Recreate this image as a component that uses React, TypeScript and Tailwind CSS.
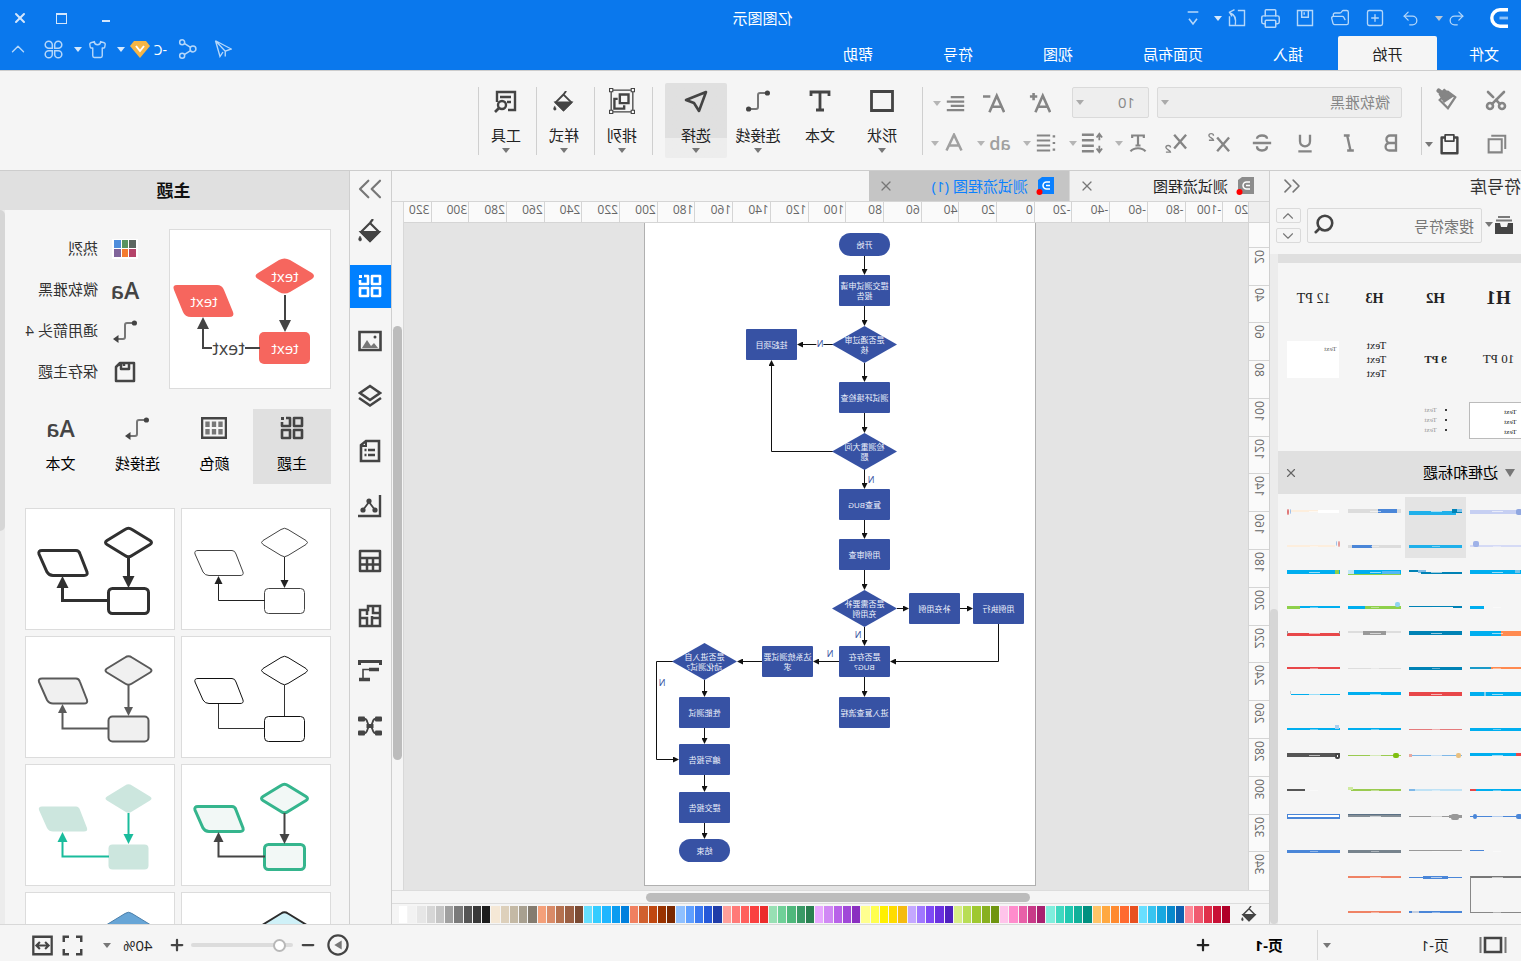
import React from "react";
import {
  Undo2, Redo2, SquarePlus, FolderOpen, Printer, ChevronUp, ChevronDown, ChevronsLeft, ChevronsRight,
  Scissors, Search, X, Shirt, Plus, Minus,
} from "lucide-react";

type Kids = { children?: React.ReactNode; className?: string };

const Caret = ({ className = "text-[#777]" }: { className?: string }) => (
  <svg viewBox="0 0 8 5" className={`h-[5px] w-2 shrink-0 ${className}`} fill="currentColor" aria-hidden="true"><path d="M0 0h8L4 5z" /></svg>
);

const Ico = ({ children, className = "size-6" }: Kids) => (
  <svg viewBox="0 0 24 24" className={`shrink-0 ${className}`} fill="none" stroke="currentColor" strokeWidth="2" aria-hidden="true">{children}</svg>
);

const Bucket = ({ className }: { className?: string }) => (
  <Ico className={className}>
    <path d="M9 0l3 4M12 4l9 9-9 9-9-9z" strokeWidth="2.200" />
    <path d="M3 13h18l-9 9z" fill="currentColor" />
    <path d="M22 17c1 2 2 3 1 4.500a1.500 1.500 0 0 1-2.500-.5c-.3-1.500.8-2.500 1.500-4z" fill="currentColor" strokeWidth="0.500" />
  </Ico>
);

const Tiles = ({ className }: { className?: string }) => (
  <Ico className={className}>
    <path d="M2 2h8v8H2zM2 14h8v8H2zM14 14h8v8h-8zM18 2h-4v8h8V6" strokeWidth="2.600" strokeLinejoin="round" />
    <path d="M20 1h3v3h-3z" fill="currentColor" stroke="none" />
  </Ico>
);

const Connector = ({ arrow = false, className }: { arrow?: boolean; className?: string }) => (
  <Ico className={className}>
    <path d="M4 4h6q2 0 2 2v12q0 2 2 2h5" stroke="#777" strokeWidth="2" />
    <circle cx="2.600" cy="4" r="2.600" fill="currentColor" stroke="none" />
    {arrow ? <path d="M18.500 16l5.500 4-5.500 4z" fill="currentColor" stroke="none" /> : <circle cx="21.400" cy="20" r="2.600" fill="currentColor" stroke="none" />}
  </Ico>
);

const quick = "flex w-[35px] justify-center";

function TitleBar() {
  return (
    <div className="flex h-9 items-center text-[#b5d7fa]">
      <svg viewBox="0 0 18 20" className="ml-[13px] mr-[23px] h-5 w-[18px]" fill="none" stroke="#fff" strokeWidth="3.400" aria-hidden="true">
        <path d="M0 1.800h8a8.200 8.200 0 0 1 0 16.400H0" /><path d="M0 10h8.500" stroke="#8cc1f8" strokeWidth="2.800" />
      </svg>
      <button aria-label="撤销" className="flex w-5 justify-center"><Undo2 className="size-[19px]" strokeWidth={1.6} /></button>
      <button aria-label="撤销历史" className="flex w-4 justify-center"><Caret className="text-[#b9c6d4]" /></button>
      <button aria-label="重做" className="ml-[3px] flex w-[35px] justify-center"><Redo2 className="size-[19px]" strokeWidth={1.6} /></button>
      <button aria-label="新建" className={quick}><SquarePlus className="size-5" strokeWidth={1.6} /></button>
      <button aria-label="打开" className={quick}><FolderOpen className="size-5" strokeWidth={1.6} /></button>
      <button aria-label="保存" className={quick}>
        <Ico className="size-5"><path d="M3 3h18v18H3zM8 3v8h8V3M13 5v3" strokeWidth="1.700" /></Ico>
      </button>
      <button aria-label="打印" className={quick}><Printer className="size-[21px]" strokeWidth={1.7} /></button>
      <button aria-label="导出" className="flex w-[31px] justify-center">
        <Ico className="size-5"><path d="M11 3H3v18h18V10M14 20c-1-7 0-12 6-14M15 2l6 3-3 5" strokeWidth="1.700" /></Ico>
      </button>
      <Caret className="text-[#d5e8fc]" />
      <button aria-label="自定义工具栏" className="ml-[11px] flex w-5 justify-center">
        <Ico className="size-4"><path d="M4 3h16M6 13l6 8 6-8" strokeWidth="2.400" /></Ico>
      </button>
      <h1 className="flex-1 text-center text-[15px] text-white">亿图图示</h1>
      <div className="flex w-[342px] justify-end text-[#d3e6fc]">
        <button aria-label="最小化" className="flex w-11 items-end justify-center"><span className="mb-1 h-[2px] w-2 bg-current" /></button>
        <button aria-label="最大化" className="flex w-11 items-center justify-center"><span className="h-[11px] w-[11px] border border-t-2 border-current" /></button>
        <button aria-label="关闭" className="flex w-10 items-center justify-center"><X className="size-4" strokeWidth={3} /></button>
      </div>
    </div>
  );
}

function MenuBar() {
  const rest = ["插入", "页面布局", "视图", "符号", "帮助"];
  return (
    <div className="flex h-[34px] items-stretch text-[15px] text-white">
      <button className="mr-[10px] w-[74px] pt-[2px]">文件</button>
      <button className="w-[99px] rounded-t-xs bg-[#f5f5f5] pt-[2px] text-[#222]">开始</button>
      {rest.map((t) => <button key={t} className="px-[35px] pt-[2px]">{t}</button>)}
      <div className="ml-auto flex items-center pb-2 text-[#b5d7fa]">
        <button aria-label="发送" className="flex w-[35px] justify-center">
          <Ico className="size-[18px]"><path d="M22 1L1 12l8 3 13-14-6 21-4-6M9 15v7" strokeWidth="1.800" /></Ico>
        </button>
        <button aria-label="分享" className="flex w-[35px] justify-center">
          <Ico className="size-5"><circle cx="6" cy="12" r="3.500" strokeWidth="1.800" /><circle cx="19" cy="4" r="3" strokeWidth="1.800" /><circle cx="19" cy="20" r="3" strokeWidth="1.800" /><path d="M9 10l7-4.500M9 14l7 4.500" strokeWidth="1.800" /></Ico>
        </button>
        <span className="ml-1 w-[17px] text-[14px] text-white">-C</span>
        <svg viewBox="0 0 20 17" className="h-[17px] w-5" aria-hidden="true"><path d="M4 0h12l4 5-10 12L0 5z" fill="#f5b546" /><path d="M6 5l4 5 4-5" fill="none" stroke="#fff" strokeWidth="2" /></svg>
        <span className="flex w-[18px] justify-center"><Caret className="text-[#d5e8fc]" /></span>
        <button aria-label="皮肤" className="flex w-7 justify-center"><Shirt className="size-[19px]" strokeWidth={1.8} /></button>
        <span className="flex w-3 justify-center"><Caret className="text-[#d5e8fc]" /></span>
        <button aria-label="应用" className="flex w-9 justify-center">
          <Ico className="size-[19px]"><path d="M10.500 10.500H6A4.500 4.500 0 1 1 10.500 6zM13.500 10.500H18A4.500 4.500 0 1 0 13.500 6zM10.500 13.500H6A4.500 4.500 0 1 0 10.500 18zM13.500 13.500H18a4.500 4.500 0 1 1-4.500 4.500z" strokeWidth="1.900" /></Ico>
        </button>
        <button aria-label="收起功能区" className="flex w-9 justify-center"><ChevronUp className="size-[22px]" strokeWidth={1.5} /></button>
      </div>
    </div>
  );
}

const Cell = ({ label, children }: { label: string; children: React.ReactNode }) => (
  <button aria-label={label} className="flex w-[43px] items-center justify-center">{children}</button>
);
const Pair = ({ label, children }: { label: string; children: React.ReactNode }) => (
  <button aria-label={label} className="flex w-[46px] items-center"><span className="flex w-[30px] justify-center">{children}</span><Caret className="text-[#b5b5b5]" /></button>
);
const Sep = () => <span className="h-[68px] w-px shrink-0 bg-[#cfcfcf]" />;

const Big = ({ label, icon, caret = true, active = false, narrow = false }: { label: string; icon: React.ReactNode; caret?: boolean; active?: boolean; narrow?: boolean }) => (
  <button className={`-mt-1 flex h-[75px] shrink-0 flex-col items-center rounded-xs text-[15px] leading-5 text-[#222] ${narrow ? "w-[57px] pl-[3px]" : "w-[62px]"} ${active ? "bg-linear-to-b from-[#e0e0e0] from-73% to-[#ededed] to-73%" : ""}`}>
    <span className="flex h-[42px] items-center pb-[6px] text-[#444]">{icon}</span>
    <span>{label}</span>
    {caret && <span className="mt-[3px]"><Caret /></span>}
  </button>
);

const Styled = ({ d }: { d: string }) => <Ico className="size-5"><path d={d} strokeWidth="2.800" /></Ico>;

function Ribbon() {
  return (
    <div className="flex h-[101px] shrink-0 overflow-hidden border-y border-[#cdcdcd] bg-[#f5f5f5] pt-4 text-[#858585]">
      <div className="grid h-[72px] w-[99px] shrink-0 grid-cols-2 grid-rows-2 items-center">
        <button aria-label="剪切" className="flex justify-center pb-[10px]"><Scissors className="size-6 -rotate-90" strokeWidth={2.6} /></button>
        <button aria-label="格式刷" className="flex justify-center pb-3">
          <Ico className="size-[22px]"><path d="M3 10l8-6 9 9-9 9z" strokeWidth="2.400" /><path d="M6 9l9-7 5 5-5 8z" fill="currentColor" /><path d="M17 6l4-3" strokeWidth="5" strokeLinecap="round" /></Ico>
        </button>
        <button aria-label="复制" className="flex justify-center pt-[6px]">
          <Ico className="size-[21px]"><path d="M6 6h15v15H6zM2 17V2h16" strokeWidth="2.300" /></Ico>
        </button>
        <button aria-label="粘贴" className="flex items-center justify-center gap-[6px] pl-[9px] pt-[6px] text-[#444]">
          <Ico className="size-[21px]"><path d="M3 4h18v18H3z" strokeWidth="2.800" strokeLinejoin="round" /><path d="M7 1h10v7H7z" fill="#f5f5f5" strokeLinejoin="round" /></Ico>
          <Caret />
        </button>
      </div>
      <Sep />
      <div className="shrink-0">
        <div className="flex h-8 pl-[19px]">
          <div className="relative w-[245px]">
            <select aria-label="字体" className="h-[31px] w-full appearance-none rounded-xs border border-[#dadada] bg-[#eee] pl-[11px] text-[15px] text-[#888]"><option>微软雅黑</option></select>
            <span className="pointer-events-none absolute right-1 top-[13px] flex"><Caret className="text-[#aaa]" /></span>
          </div>
          <div className="relative ml-2 w-[77px]">
            <select aria-label="字号" className="h-[31px] w-full appearance-none rounded-xs border border-[#dadada] bg-[#eee] pl-[13px] text-[15px] text-[#888]"><option>10</option></select>
            <span className="pointer-events-none absolute right-1 top-[13px] flex"><Caret className="text-[#aaa]" /></span>
          </div>
          <div className="ml-[9px] flex">
            <button aria-label="增大字号" className="flex w-[46px] items-center justify-center"><Ico className="size-[22px]"><path d="M1 22L9 4l8 18M4 16h10M19 1v8M15 5h8" strokeWidth="2.800" /></Ico></button>
            <button aria-label="减小字号" className="flex w-[46px] items-center justify-center"><Ico className="size-[22px]"><path d="M1 22L9 4l8 18M4 16h10M16 5h8" strokeWidth="2.800" /></Ico></button>
            <Pair label="对齐"><Ico className="size-[19px]"><path d="M1 4h17M1 9.500h22M1 15h17M1 20.500h22" strokeWidth="2.800" /></Ico></Pair>
          </div>
        </div>
        <div className="mt-[10px] flex h-7 pl-[8px]">
          <Cell label="粗体"><Styled d="M6 3h7a4.500 4.500 0 0 1 0 9H6zM6 12h8a4.500 4.500 0 0 1 0 9H6z" /></Cell>
          <Cell label="斜体"><Styled d="M10 3h7M13 3L9 21M5 21h8" /></Cell>
          <Cell label="下划线"><Styled d="M6 2v8a6 6 0 0 0 12 0V2M4 22h16" /></Cell>
          <Cell label="删除线"><Styled d="M18 7c0-3-3-4-6-4s-6 1-6 4M1 12h22M6 16c0 4 3 5 6 5s6-1 6-5" /></Cell>
          <Cell label="上标"><Ico className="size-[22px]"><path d="M1 6l13 15M14 6L1 21" strokeWidth="2.600" /><path d="M18 4c0-3 5-3 5 0 0 2-5 3-5 5h5" strokeWidth="1.500" /></Ico></Cell>
          <Cell label="下标"><Ico className="size-[22px]"><path d="M1 3l13 15M14 3L1 18" strokeWidth="2.600" /><path d="M18 17c0-3 5-3 5 0 0 2-5 3-5 5h5" strokeWidth="1.500" /></Ico></Cell>
          <div className="ml-[2px] flex">
            <Pair label="文字方向"><Ico className="size-5"><path d="M5 6V3h14v3M12 3v12M9 15h6M3 22c4-5 14-5 18 0" strokeWidth="2.600" /></Ico></Pair>
            <Pair label="行距"><Ico className="size-[22px]"><path d="M4 3v6M4 15v6M1 6l3-4 3 4M1 18l3 4 3-4" /><path d="M10 3h13M10 9h13M10 15h13M10 21h13" strokeWidth="2.600" /></Ico></Pair>
            <Pair label="项目符号"><Ico className="size-5"><path d="M1 4h3M1 12h3M1 20h3M7 3h16M7 9h16M7 15h16M7 21h16" strokeWidth="2.600" /></Ico></Pair>
            <Pair label="文本突出显示"><span className="text-[18px] font-semibold leading-7 text-[#a0a0a0]">ab</span></Pair>
            <Pair label="字体颜色"><Ico className="size-5 text-[#a0a0a0]"><path d="M3 21l9-19 9 19M6 15h12" strokeWidth="3" /></Ico></Pair>
          </div>
        </div>
      </div>
      <Sep />
      <div className="ml-[9px] mr-3 flex">
        <Big label="形状" icon={<Ico><path d="M1.500 2.500h21v19h-21z" strokeWidth="2.800" /></Ico>} />
        <Big label="文本" caret={false} icon={<Ico><path d="M3 7V3h18v4M12 3v18M8 21h8" strokeWidth="2.800" /></Ico>} />
        <Big label="连接线" icon={<Connector />} />
        <Big label="选择" active icon={<Ico><path d="M2 3l20 8-8 3-5 8z" strokeWidth="2.600" strokeLinejoin="round" /></Ico>} />
      </div>
      <Sep />
      <Big narrow label="排列" icon={<Ico className="size-[26px]"><path d="M2 2h20v20H2z" strokeWidth="1.200" /><path d="M6 6h8v8H6zM16 10h3v9h-9v-3" strokeWidth="2.200" /><path d="M0.500 0.500h3v3h-3zM20.500 0.500h3v3h-3zM0.500 20.500h3v3h-3zM20.500 20.500h3v3h-3z" fill="#fff" strokeWidth="1" /></Ico>} />
      <Sep />
      <Big narrow label="样式" icon={<Bucket className="size-[21px]" />} />
      <Sep />
      <Big narrow label="工具" icon={<Ico><path d="M10 21H3V3h18v10M7 8h11M7 13h4" strokeWidth="2.400" /><circle cx="16" cy="16" r="4" strokeWidth="2.400" /><path d="M19 19l4 4" strokeWidth="2.600" /></Ico>} />
      <Sep />
    </div>
  );
}

/* One thumbnail is a list of bars: [offset from the far edge, y, width, height, colour] */
type Bar = [number, number, number, number, string];
const B = "#00aeef", D = "#0082b5", R = "#e84749", N = "#4a86d8", G = "#8ed04b", O = "#ff8a50", L = "#dcdcdc", K = "#555", S = "#ef8264";
const thumbs: Bar[][] = [
  [[0, 13, 53, 4, "#c6cff2"], [46, 12, 6, 6, "#8fa6e0"], [0, 48, 53, 2, "#d5daf5"], [3, 44, 6, 6, "#9fb2e8"]],
  [[0, 14, 47, 4, "#1fb0ea"], [43, 12, 10, 4, D], [48, 12, 5, 3, "#7fc4ee"], [0, 48, 53, 3, "#1fb0ea"]],
  [[0, 12, 53, 4, L], [30, 12, 19, 4, N], [0, 48, 53, 3, L], [4, 48, 20, 3, N]],
  [[0, 12, 2, 6, "#e07878"], [3, 12, 1, 5, "#9fc0e8"], [4, 13, 28, 2, "#fdeedd"], [31, 13, 21, 3, "#fff"], [0, 48, 48, 2, "#fdeedd"], [49, 44, 1, 5, "#9fc0e8"], [51, 44, 2, 6, "#e79a98"]],
  [[0, 12, 53, 4, B], [45, 12, 5, 3, "#6fc4ea"], [0, 48, 14, 3, B]],
  [[0, 12, 16, 2, D], [9, 12, 8, 3, "#7fbce6"], [12, 14, 41, 2, D], [0, 48, 53, 1, D], [44, 48, 9, 2, D]],
  [[0, 12, 53, 4, B], [0, 12, 6, 4, "#bfe6f5"], [0, 16, 53, 1, G], [34, 13, 18, 3, "#53b8f5"], [0, 48, 17, 3, B], [17, 48, 36, 3, G], [47, 44, 5, 5, "#8fd4f0"]],
  [[0, 12, 53, 4, B], [48, 12, 4, 4, G], [0, 48, 13, 3, G], [13, 48, 40, 2, B]],
  [[0, 12, 53, 5, B], [31, 12, 22, 5, O], [0, 48, 53, 2, O], [0, 48, 21, 2, "#1a9ac8"]],
  [[0, 12, 53, 4, D], [0, 48, 53, 3, D]],
  [[0, 12, 53, 2, "#ddd"], [15, 12, 23, 4, "#999"], [0, 49, 53, 1, "#ddd"]],
  [[0, 14, 53, 3, R], [0, 12, 1, 3, "#999"], [52, 12, 1, 3, "#999"], [0, 48, 53, 2, R]],
  [[0, 12, 53, 4, B], [14, 12, 2, 4, "#7fd0f0"], [0, 48, 53, 3, B]],
  [[0, 12, 53, 4, R], [0, 49, 53, 1, "#e57a7c"]],
  [[0, 12, 53, 3, B], [0, 48, 53, 2, B]],
  [[4, 14, 49, 1, B], [3, 11, 1, 3, "#ccc"], [0, 48, 53, 2, B], [48, 45, 4, 4, "#a8d0f0"]],
  [[0, 12, 46, 3, B], [46, 12, 7, 3, R], [0, 48, 53, 2, B], [0, 48, 6, 2, R]],
  [[0, 14, 53, 1, "#7fb8e8"], [47, 12, 5, 5, "#e8c080"], [0, 13, 3, 3, "#e8a8a0"], [0, 48, 53, 2, "#bfe2f5"], [0, 48, 6, 2, "#7fb8e8"]],
  [[0, 14, 53, 1, "#9acb50"], [45, 12, 6, 5, "#7fbf10"], [3, 48, 50, 2, "#9acb50"], [0, 46, 5, 3, "#cfeaa0"]],
  [[0, 12, 53, 4, K], [48, 12, 5, 6, "#444"], [50, 14, 1, 2, "#fff"], [0, 48, 18, 2, K]],
  [[0, 14, 53, 1, N], [46, 12, 6, 5, N], [3, 12, 4, 5, N], [51, 16, 1, 36, "#9fbce8"], [0, 48, 14, 1, N]],
  [[0, 14, 53, 1, "#999"], [42, 12, 8, 6, "#999"], [40, 13, 13, 3, "#999"], [0, 48, 53, 1, "#999"]],
  [[0, 12, 53, 3, "#848e96"], [0, 12, 53, 1, "#5b7186"], [0, 48, 53, 3, "#77838d"]],
  [[0, 12, 53, 5, N], [1, 13, 51, 2, "#fff"], [0, 48, 53, 3, N]],
  [[0, 13, 53, 2, "#777"], [0, 13, 1, 37, "#888"], [0, 49, 53, 1, "#888"]],
  [[0, 14, 53, 1, N], [14, 13, 25, 3, N], [0, 48, 53, 2, N], [3, 48, 7, 2, "#c5cfe0"]],
  [[0, 13, 53, 2, S], [0, 48, 53, 2, S]],
  [],
];

const Plain = ({ children, className = "" }: Kids) => <div className={`flex w-[61px] shrink-0 items-center justify-center ${className}`}>{children}</div>;

function SymbolLibrary() {
  return (
    <aside className="flex w-[252px] shrink-0 flex-col border-r border-[#d0d0d0] bg-[#f5f5f5]">
      <div className="flex h-8 items-center justify-between pr-2">
        <h2 className="text-[17px] text-[#333]">符号库</h2>
        <button aria-label="收起符号库" className="flex pb-[2px]"><ChevronsLeft className="size-[28px] text-[#777]" strokeWidth={1.4} /></button>
      </div>
      <div className="flex h-[51px] pt-[5px]">
        <button aria-label="符号库列表" className="flex h-[33px] w-[39px] items-center gap-[2px] pl-2 text-[#444]">
          <svg viewBox="0 0 18 18" className="size-[18px]" fill="currentColor" aria-hidden="true"><path d="M3 0h12v2H3zM1 3.500h16v2H1z" opacity=".7" /><path d="M0 7h5l1 4h6l1-4h5v11H0z" /></svg>
          <Caret />
        </button>
        <div className="relative h-[35px] w-[175px]">
          <input aria-label="搜索符号" placeholder="搜索符号" className="h-full w-full rounded-xs border border-[#dadada] bg-[#f5f5f5] pl-[7px] text-[15px] placeholder:text-[#777]" />
          <Search className="absolute right-[6px] top-[5px] size-[22px] text-[#444]" strokeWidth={2.8} />
        </div>
        <div className="ml-[6px] flex flex-col gap-[5px] text-[#777]">
          <button aria-label="上一个" className="flex h-[15px] w-[25px] items-center justify-center rounded-xs border border-[#dadada]"><ChevronUp className="size-[18px]" strokeWidth={1.5} /></button>
          <button aria-label="下一个" className="flex h-[15px] w-[25px] items-center justify-center rounded-xs border border-[#dadada]"><ChevronDown className="size-[18px]" strokeWidth={1.5} /></button>
        </div>
      </div>
      <div className="flex min-h-0 flex-1">
        <div className="min-w-0 flex-1 overflow-hidden">
          <div className="h-[9px] bg-[#dfdfdf]" />
          <div className="h-[188px] pt-1 font-['Liberation_Serif','Noto_Sans_CJK_SC',serif] text-[#222]">
            <div className="-ml-[6px] flex h-[62px]">
              <Plain className="pr-1 text-[19px] font-bold">H1</Plain><Plain className="text-[15px] font-bold">H2</Plain><Plain className="text-[14px] font-bold">H3</Plain><Plain className="text-[14px]">12 PT</Plain>
            </div>
            <div className="-ml-[6px] flex h-[60px]">
              <Plain className="pr-1 text-[13px]">10 PT</Plain><Plain className="text-[11px] font-bold">9 PT</Plain>
              <Plain className="flex-col pr-1 text-[11px] leading-[14px]"><span>Text</span><span>Text</span><span>Text</span></Plain>
              <Plain><div className="h-[37px] w-[52px] bg-white pl-[3px] pt-[2px] text-[7px] leading-3 text-[#666]">Text</div></Plain>
            </div>
            <div className="-ml-[6px] flex h-[62px]">
              <Plain><div className="h-[37px] w-[54px] border border-[#bbb] bg-white pl-[6px] pt-1 text-[7px] leading-[10px]"><p>Text</p><p>Text</p><p>Text</p></div></Plain>
              <Plain><ul className="list-inside list-disc text-[7px] leading-[10px] text-[#999] marker:text-black"><li>Text</li><li>Text</li><li>Text</li></ul></Plain>
            </div>
          </div>
          <div className="flex h-[43px] items-center bg-[#e0e0e0] pl-[6px] pr-[6px]">
            <svg viewBox="0 0 10 8" className="h-2 w-[10px] text-[#777]" fill="currentColor" aria-hidden="true"><path d="M0 0h10L5 8z" /></svg>
            <h3 className="ml-[7px] flex-1 text-[15px] text-black">边框和标题</h3>
            <button aria-label="关闭边框和标题" className="flex"><X className="size-[14px] text-[#666]" strokeWidth={2} /></button>
          </div>
          <div className="-ml-[6px] mt-[3px] flex w-[244px] flex-wrap">
            {thumbs.map((bars, i) => (
              <svg key={i} viewBox="0 0 61 61" className={`size-[61px] ${i === 1 ? "bg-[#e4e4e4]" : ""}`} aria-hidden="true">
                {bars.map(([d, y, w, h, c], j) => <rect key={j} x={57 - d - w} y={y} width={w} height={h} fill={c} rx={h > 4 && w < 9 ? 2 : 0} />)}
                {bars.length > 0 && <><path d="M24 14.500h11" stroke="#fff" strokeWidth="1" opacity=".6" /><path d="M26 49.500h8" stroke="#fff" strokeWidth="1" opacity=".4" /></>}
              </svg>
            ))}
          </div>
        </div>
        <div className="flex w-2 flex-col justify-end bg-[#ececec]"><div className="h-[47%] rounded-full bg-[#d6d6d6]" /></div>
      </div>
    </aside>
  );
}

const DocIcon = ({ className }: { className: string }) => (
  <svg viewBox="0 0 20 18" className={`h-[18px] w-5 shrink-0 ${className}`} aria-hidden="true">
    <path d="M0 0h12l4 3v14H0z" fill="currentColor" />
    <path d="M4 5h3.500a3.500 3.500 0 0 1 0 7H4M4 8.500h4" fill="none" stroke="#fff" strokeWidth="1.500" />
    <circle cx="14.500" cy="15" r="3" fill="#f00" />
  </svg>
);

type Box = { t: string[]; x: number; y: number; k?: "pill" | "dia" };
const boxes: Box[] = [
  { t: ["开始"], x: 146, y: 10, k: "pill" },
  { t: ["提交测试申请", "报告"], x: 146, y: 52 },
  { t: ["是否通过审", "核"], x: 139, y: 103, k: "dia" },
  { t: ["挂起项目"], x: 239, y: 106 },
  { t: ["测试环境检查"], x: 146, y: 159 },
  { t: ["检测重大问", "题"], x: 139, y: 210, k: "dia" },
  { t: ["复查BUG"], x: 146, y: 266 },
  { t: ["用例审查"], x: 146, y: 316 },
  { t: ["是否需要补", "充用例"], x: 139, y: 367, k: "dia" },
  { t: ["补充用例"], x: 76, y: 370 },
  { t: ["用例执行"], x: 12, y: 370 },
  { t: ["是否存在", "BUG?"], x: 146, y: 423 },
  { t: ["达系统测试要", "求"], x: 223, y: 423 },
  { t: ["是否进入自", "动化测试?"], x: 299, y: 420, k: "dia" },
  { t: ["进入复查流程"], x: 146, y: 474 },
  { t: ["性能测试"], x: 306, y: 474 },
  { t: ["编写报告"], x: 306, y: 521 },
  { t: ["提交报告"], x: 306, y: 569 },
  { t: ["结束"], x: 306, y: 616, k: "pill" },
];
const edges = [
  "M171.500 33V50", "M171.500 83V101", "M171.500 140V157", "M171.500 190V208", "M171.500 246V264", "M171.500 297V314", "M171.500 347V365",
  "M171.500 404V421", "M171.500 454V472", "M203 121.500H237", "M203 228.500H264.500V139", "M139 385.500H129", "M76 385.500H65",
  "M37.500 401V438.500H144", "M197 438.500H221", "M274 438.500H297", "M331.500 457V472", "M331.500 505V519", "M331.500 552V567", "M331.500 600V614",
  "M363 438.500H379.500V536.500H359",
];
const yesNo = [[216, 121], [165, 257], [178, 412], [206, 431], [374, 460]];

function Paper() {
  return (
    <div className="relative mx-auto h-[663px] w-[392px] border border-t-0 border-[#b0b0b0] bg-white text-[8px] leading-[10px]">
      <div className="absolute inset-y-0 -left-px w-[392px]">
        <svg viewBox="0 0 392 662" className="h-[662px] w-[392px]" aria-hidden="true">
          <defs><marker id="tip" viewBox="0 0 6 6" refX="4" refY="3" markerWidth="6" markerHeight="6" markerUnits="userSpaceOnUse" orient="auto"><path d="M0 0l6 3-6 3z" fill="#111" /></marker></defs>
          {edges.map((d) => <path key={d} d={d} fill="none" stroke="#111" markerEnd="url(#tip)" />)}
        </svg>
        {yesNo.map(([x, y], i) => <span key={y} className={`absolute -translate-x-1/2 -translate-y-1/2 text-[9px] text-[#3752a4] ${i === 0 ? "bg-white" : ""}`} style={{ left: x, top: y }}>N</span>)}
        {boxes.map((b, i) => (
          <div key={i} style={{ left: b.x, top: b.y }}
            className={`absolute flex flex-col items-center justify-center whitespace-nowrap text-[#f0f3fc] ${b.k === "dia" ? "h-[37px] w-[65px] bg-[#3752a4] [clip-path:polygon(50%_0,100%_50%,50%_100%,0_50%)]" : b.k === "pill" ? "h-[23px] w-[51px] rounded-full bg-[#3752a4]" : "h-[31px] w-[51px] rounded-[1px] bg-[#3752a4]"}`}>
            {b.t.map((line) => <span key={line}>{line}</span>)}
          </div>
        ))}
      </div>
    </div>
  );
}

const hTicks = Array.from({ length: 23 }, (_, i) => (i - 6) * 20);
const vTicks = Array.from({ length: 18 }, (_, i) => i * 20);

const palette = [
  "#fff", "#f2f2f2", "#e6e6e6", "#d6d6d6", "#c4c4c4", "#a0a0a0", "#7a7a7a", "#555", "#383838", "#1c1c1c",
  "#f5e8d6", "#ddd0bb", "#c4b9a5", "#a8a090", "#847c70", "#f4a07a", "#d98b68", "#b5714f", "#9a5f43", "#7a4a33",
  "#66dfff", "#33ccff", "#1fb6ff", "#0a9cf0", "#0080dd", "#f08060", "#d0602f", "#c04810", "#9a3300", "#7a2800",
  "#8fc0ff", "#5f9fff", "#3a78f0", "#2558d8", "#1f3ca8", "#ff9f9a", "#ff7a78", "#ff5f5c", "#fa4040", "#ec2c2c",
  "#98e0b4", "#6fd098", "#4fb87c", "#3a9a66", "#2a8050", "#e8a8ff", "#d088f4", "#b862e8", "#a048d8", "#8a2fc0",
  "#ffff90", "#ffff50", "#fff000", "#ffdc00", "#f5bb10", "#c4a8ff", "#a078ff", "#7f4af5", "#6a30e0", "#5020c0",
  "#d8ee88", "#b8dd55", "#9fc830", "#88b020", "#6f9510", "#ffc4ea", "#ff8ccc", "#e860a8", "#c83a88", "#a82070",
  "#80eedd", "#40d8c0", "#20c8b0", "#10b09a", "#009080", "#ffc468", "#ffa840", "#ff8a30", "#ff6a30", "#e85020",
  "#68dfff", "#38c4f0", "#18a8e0", "#0888cc", "#1060b0", "#ff8a98", "#f05a70", "#e0304a", "#c81035", "#b00028",
];

function Workspace() {
  return (
    <main className="flex min-w-0 flex-1 flex-col bg-[#f5f5f5]">
      <div className="flex h-[31px] shrink-0 border-b border-[#d5d5d5] text-[15px]">
        <div className="flex w-[200px] items-center border-r border-[#d8d8d8] bg-[#f1f1f1] pl-[15px] pr-[9px] text-[#222]">
          <DocIcon className="text-[#8c8c8c]" /><span className="ml-[6px] flex-1">测试流程图</span>
          <button aria-label="关闭标签" className="flex"><X className="size-4 text-[#777]" strokeWidth={1.8} /></button>
        </div>
        <div className="flex w-[200px] items-center bg-[#c5c5c5] pl-[15px] pr-[9px] text-[#0a80ff]">
          <DocIcon className="text-[#0a80ff]" /><span className="ml-[6px] flex-1">测试流程图 (1)</span>
          <button aria-label="关闭标签" className="flex"><X className="size-4 text-[#777]" strokeWidth={1.8} /></button>
        </div>
      </div>
      <div className="flex min-h-0 flex-1">
        <div className="flex w-[21px] shrink-0 flex-col border-r border-[#d5d5d5]">
          <div className="h-[21px] shrink-0 border-b border-[#d5d5d5] bg-[#eee]" />
          <div className="min-h-0 flex-1 overflow-hidden bg-[#fafafa] text-[12px] leading-4 text-[#666]">
            <div className="-mt-[14px] flex h-[680px] flex-col">
              {vTicks.map((n) => (
                <div key={n} className="flex flex-1 items-start border-t border-[#d5d5d5] pl-[2px] pt-[2px]"><span className="rotate-180 [writing-mode:vertical-rl]">{n > 0 ? n : ""}</span></div>
              ))}
            </div>
          </div>
        </div>
        <div className="flex min-w-0 flex-1 flex-col">
          <div className="h-[21px] shrink-0 overflow-hidden border-b border-[#d5d5d5] bg-[#fafafa]">
            <div className="-ml-[13px] flex h-full w-[867px] text-[12px] leading-4 text-[#666]">
              {hTicks.map((n) => <div key={n} className="flex-1 border-l border-[#d5d5d5] pl-px">{n}</div>)}
            </div>
          </div>
          <div className="min-h-0 flex-1 overflow-hidden bg-[#e4e4e4] pr-7"><Paper /></div>
        </div>
        <div className="w-3 shrink-0 border-l border-[#d8d8d8] px-px pt-[124px]"><div className="h-[434px] rounded-full bg-[#bcbcbc]" /></div>
      </div>
      <div className="h-[14px] shrink-0 border-y border-[#dcdcdc] pl-[239px] pt-[2px]"><div className="h-[9px] w-[384px] rounded-full bg-[#bcbcbc]" /></div>
      <div className="flex h-[20px] shrink-0 items-center pr-[7px]">
        <button aria-label="填充颜色" className="flex w-[39px] justify-center text-[#444]"><Bucket className="size-4" /></button>
        <div className="flex h-[17px] flex-1 flex-row-reverse gap-px">
          {palette.map((c, i) => <span key={i} className="flex-1" style={{ backgroundColor: c }} />)}
        </div>
      </div>
    </main>
  );
}

function SideStrip() {
  const items: [string, React.ReactNode][] = [
    ["填充", <Bucket className="size-6" />],
    ["主题", <Tiles className="size-6" />],
    ["图片", <Ico><path d="M1.500 3h21v18h-21z" strokeWidth="2.600" /><path d="M4 19l4-5 3 3 4-6 5 8z" fill="#777" stroke="none" /><circle cx="7" cy="8" r="1.500" fill="currentColor" stroke="none" /></Ico>],
    ["图层", <Ico><path d="M12 2l10 7-10 7L2 9zM1 14l11 7.500L23 14" strokeWidth="2.500" /></Ico>],
    ["文档", <Ico><path d="M3 2h13l5 4v16H3z" strokeWidth="2.600" /><path d="M16 2v5h5" strokeWidth="2" /><path d="M7 11h7M15.500 11h2M7 16h7M15.500 16h2" strokeWidth="2.400" /></Ico>],
    ["图表", <Ico><path d="M2 1v21h22" strokeWidth="2.400" /><path d="M7 16l6-8 6 8" strokeWidth="1.800" /><g fill="currentColor" stroke="none"><circle cx="7" cy="16" r="2.600" /><circle cx="13" cy="7" r="2.600" /><circle cx="19" cy="16" r="2.600" /></g></Ico>],
    ["表格", <Ico><path d="M2 2h20v20H2zM2 9h20M2 15.500h20M9 9v13M15 9v13" strokeWidth="2.500" strokeLinejoin="round" /></Ico>],
    ["平面图", <Ico><path d="M2 2h12v4h8v16H2zM2 9h7V2M2 14h8v8M10 14v-2M15 22v-8h7M15 11V6" strokeWidth="2.500" /></Ico>],
    ["甘特图", <Ico><path d="M1.500 6V2.500h21V6" strokeWidth="3" /><path d="M3 10.500h10M12 20.500h11" strokeWidth="3.600" /><path d="M12 10.500h7v9" strokeWidth="1.600" /></Ico>],
    ["思维导图", <Ico><path d="M6 5h1c3 0 2 7 5 7M6 19h1c3 0 2-7 5-7M18 5h-1c-3 0-2 7-5 7M18 19h-1c-3 0-2-7-5-7" strokeWidth="1.800" /><g fill="currentColor" stroke="none"><rect y="2.500" width="7" height="5" rx="1" /><rect y="16.500" width="7" height="5" rx="1" /><rect x="17" y="2.500" width="7" height="5" rx="1" /><rect x="17" y="16.500" width="7" height="5" rx="1" /><rect x="8.500" y="10" width="7" height="4" /></g></Ico>],
  ];
  return (
    <nav aria-label="属性面板" className="flex w-[43px] shrink-0 flex-col border-x border-[#cfcfcf] bg-[#f5f5f5] text-[#444]">
      <button aria-label="收起面板" className="flex h-[39px] shrink-0 items-center justify-center pb-1"><ChevronsRight className="size-10 shrink-0 text-[#777]" strokeWidth={1.3} /></button>
      <div className="flex flex-col gap-3">
        {items.map(([name, icon]) => (
          <button key={name} aria-label={name} className={`flex h-[43px] w-full items-center justify-center pb-px ${name === "主题" ? "bg-[#0080ff] text-white" : ""}`}>{icon}</button>
        ))}
      </div>
    </nav>
  );
}

type Look = { fill: string; line: string; w: number; arrow: string; aw: number; tip: number };
const looks: Look[] = [
  { fill: "#fff", line: "#444", w: 1, arrow: "#222", aw: 1, tip: 8 },
  { fill: "#fff", line: "#303030", w: 3, arrow: "#303030", aw: 3, tip: 12 },
  { fill: "#fff", line: "#111", w: 1, arrow: "#333", aw: 1, tip: 0 },
  { fill: "#f0f0f0", line: "#5a5a5a", w: 2, arrow: "#5a5a5a", aw: 2, tip: 9 },
  { fill: "#f2f8f6", line: "#35b58d", w: 3, arrow: "#444", aw: 2, tip: 10 },
  { fill: "#cce6de", line: "none", w: 0, arrow: "#1abc9c", aw: 2, tip: 10 },
  { fill: "#cff1f8", line: "#2c2c2c", w: 2, arrow: "#2c2c2c", aw: 2, tip: 10 },
  { fill: "#67a5d6", line: "#4b7faa", w: 1, arrow: "#444", aw: 2, tip: 10 },
];

const ThemeArt = ({ fill, line, w, arrow, aw, tip }: Look) => (
  <svg viewBox="1 0 148 120" className="h-[120px] w-[148px]" aria-hidden="true">
    <g fill={fill} stroke={line} strokeWidth={w}>
      <path d="M43 20.500Q46.500 18 50 20.500L68 31.500Q71 33.500 68 35.500L50 46.500Q46.500 49 43 46.500L25 35.500Q22 33.500 25 31.500Z" />
      <rect x="26.500" y="79.500" width="40" height="25" rx="4" />
      <path d="M99 41.500H133Q137 41.500 136 45L128 63Q126 66.500 122 66.500H91Q87 66.500 88 63L95 45Q96 41.500 99 41.500Z" />
    </g>
    <g stroke={arrow} strokeWidth={aw} fill="none">
      <path d={`M46.500 48V${79 - tip * 0.7}`} /><path d={`M66 91.500H112.500V${67 + tip * 0.7}`} />
    </g>
    {tip > 0 && <g fill={arrow}><path d={`M46.500 79l${-tip / 2} ${-tip}h${tip}z`} /><path d={`M112.500 67l${-tip / 2} ${tip}h${tip}z`} /></g>}
  </svg>
);

const Aa = () => <span className="text-[23px] font-semibold leading-6 text-[#444]">Aa</span>;

function ThemePanel() {
  const rows: [string, React.ReactNode][] = [
    ["热烈", <svg viewBox="0 0 26 20" className="h-5 w-[26px]" aria-hidden="true"><path d="M0 0h26v20H0z" fill="#fff" /><path d="M2 1h7v8H2z" fill="#5c6660" /><path d="M10 1h6v8h-6z" fill="#5a9360" /><path d="M17 1h7v8h-7z" fill="#4f8edc" /><path d="M2 10h7v8H2z" fill="#b5446a" /><path d="M10 10h6v8h-6z" fill="#f47b30" /><path d="M17 10h7v8h-7z" fill="#80649a" /></svg>],
    ["微软雅黑", <Aa />],
    ["通用箭头 4", <Connector arrow />],
    ["保存主题", <Ico><path d="M3 3h14l4 4v14H3zM8 3v6h8V3M13 3v3" strokeWidth="2.500" strokeLinejoin="round" /></Ico>],
  ];
  const tabs: [string, React.ReactNode][] = [
    ["主题", <Tiles className="size-6" />],
    ["颜色", <Ico className="size-[26px]"><path d="M1 3h22v18H1z" strokeWidth="2.200" /><path d="M4 6h4v5H4zM10 6h4v5h-4zM16 6h4v5h-4zM4 13h4v5H4zM10 13h4v5h-4zM16 13h4v5h-4z" fill="#777" stroke="none" /></Ico>],
    ["连接线", <Connector arrow />],
    ["文本", <Aa />],
  ];
  return (
    <aside className="flex w-[349px] shrink-0 flex-col bg-[#f5f5f5]">
      <h2 className="flex h-[39px] shrink-0 items-center justify-center bg-[#e0e0e0] pl-[2px] text-[17px] font-bold text-[#111]">主题</h2>
      <div className="flex min-h-0 flex-1">
        <div className="min-w-0 flex-1 overflow-hidden pl-[18px] pt-[19px]">
          <div className="flex h-[160px]">
            <div className="h-[160px] w-[162px] shrink-0 border border-[#dcdcdc] bg-white">
              <svg viewBox="1 0 160 158" className="h-[158px] w-[160px] font-['Open_Sans',sans-serif]" role="img" aria-label="主题预览">
                <g fill="#f6665e">
                  <path d="M41 30Q46.500 27 52 30L73 43Q78 46 73 49L52 62Q46.500 65 41 62L19 49Q15 46 19 43Z" />
                  <rect x="21" y="102" width="51" height="32" rx="5" />
                  <path d="M113 55H154Q159 55 157 60L148 82Q146 87 140 87H102Q96 87 98 82L107 60Q109 55 114 55Z" />
                </g>
                <g stroke="#444" strokeWidth="2" fill="none"><path d="M46 65V92M71 118H86M119 118H128V96" /></g>
                <path d="M46 102l-6-12h12zM128 87l-6 12h12z" fill="#444" />
                <g fontSize="15" fill="#fff" textAnchor="middle"><text x="46" y="52">text</text><text x="127" y="77">text</text><text x="46" y="124">text</text></g>
                <text x="102.500" y="125" fontSize="18" fill="#444" textAnchor="middle">text</text>
              </svg>
            </div>
            <ul className="-mt-px ml-7 text-[15px] text-[#333]">
              {rows.map(([t, icon]) => (
                <li key={t} className="flex h-[41px] items-center"><button className="flex items-center"><span className="mr-[11px] flex w-8 justify-center text-[#444]">{icon}</span>{t}</button></li>
              ))}
            </ul>
          </div>
          <div className="mt-5 flex">
            {tabs.map(([t, icon], i) => (
              <button key={t} className={`flex h-[75px] flex-col items-center text-[15px] leading-5 text-black ${i === 0 ? "w-[78px] bg-[#e0e0e0]" : "w-[77px]"}`}>
                <span className="flex h-11 items-center pb-[6px] text-[#444]">{icon}</span>{t}
              </button>
            ))}
          </div>
          <div className="mt-6 grid grid-cols-[150px_150px] gap-[6px]">
            {looks.map((l, i) => <button key={i} aria-label={`主题样式 ${i + 1}`} className="h-[122px] border border-[#dcdcdc] bg-white"><ThemeArt {...l} /></button>)}
          </div>
        </div>
        <div className="w-[5px] shrink-0 bg-[#ececec]"><div className="h-[45%] rounded-l-full bg-[#d6d6d6]" /></div>
      </div>
    </aside>
  );
}

function StatusBar() {
  return (
    <footer className="flex h-[37px] shrink-0 items-center border-t border-[#d8d8d8] bg-[#f5f5f5] pt-1 text-[15px] text-[#222]">
      <button aria-label="页面列表" className="ml-[14px] text-[#444]">
        <svg viewBox="0 0 28 18" className="h-[18px] w-7" fill="none" stroke="currentColor" aria-hidden="true"><path d="M6 2h16v14H6z" strokeWidth="2.600" /><path d="M1.500 1v16M26.500 1v16" strokeWidth="2" stroke="#777" /></svg>
      </button>
      <button className="ml-[30px] flex w-[126px] items-center justify-between">页-1<Caret /></button>
      <span className="ml-[5px] h-[30px] w-px bg-[#d8d8d8]" />
      <button className="ml-[34px] font-bold text-black">页-1</button>
      <button aria-label="新建页面" className="ml-[43px]"><Plus className="size-[18px]" strokeWidth={3} /></button>
      <div className="ml-auto flex items-center text-[#444]">
        <button aria-label="演示"><Ico className="size-[22px]"><circle cx="12" cy="12" r="10.500" strokeWidth="2.400" /><path d="M16 12L8 7v10z" fill="#777" stroke="none" /></Ico></button>
        <button aria-label="缩小" className="ml-[10px]"><Minus className="size-[18px]" strokeWidth={3} /></button>
        <input type="range" aria-label="缩放" defaultValue={7} className="ml-[6px] h-1 w-[102px] appearance-none rounded-full bg-[#dcdcdc] [&::-webkit-slider-thumb]:size-[13px] [&::-webkit-slider-thumb]:appearance-none [&::-webkit-slider-thumb]:rounded-full [&::-webkit-slider-thumb]:border-2 [&::-webkit-slider-thumb]:border-[#b8b8b8] [&::-webkit-slider-thumb]:bg-white" />
        <button aria-label="放大" className="ml-[5px]"><Plus className="size-[18px]" strokeWidth={3} /></button>
        <button className="ml-[15px] flex items-center gap-3 text-[#222]">40%<Caret /></button>
        <button aria-label="全屏" className="ml-5"><Ico className="size-[21px]"><path d="M2 8V2h6M16 2h6v6M22 16v6h-6M8 22H2v-6" strokeWidth="2.800" /></Ico></button>
        <button aria-label="适应宽度" className="ml-[9px] mr-8"><Ico className="size-[21px]"><path d="M1.500 2h21v20h-21z" strokeWidth="2.600" /><path d="M6 12h12M9 8l-4 4 4 4M15 8l4 4-4 4" strokeWidth="2.400" /></Ico></button>
      </div>
    </footer>
  );
}

export default function App() {
  return (
    <div className="flex h-screen w-full -scale-x-100 flex-col overflow-hidden bg-[#f5f5f5] font-['Open_Sans','Noto_Sans_CJK_SC',sans-serif]">
      <header className="shrink-0 bg-[#0a78ed]"><TitleBar /><MenuBar /></header>
      <Ribbon />
      <div className="flex min-h-0 flex-1"><SymbolLibrary /><Workspace /><SideStrip /><ThemePanel /></div>
      <StatusBar />
    </div>
  );
}
